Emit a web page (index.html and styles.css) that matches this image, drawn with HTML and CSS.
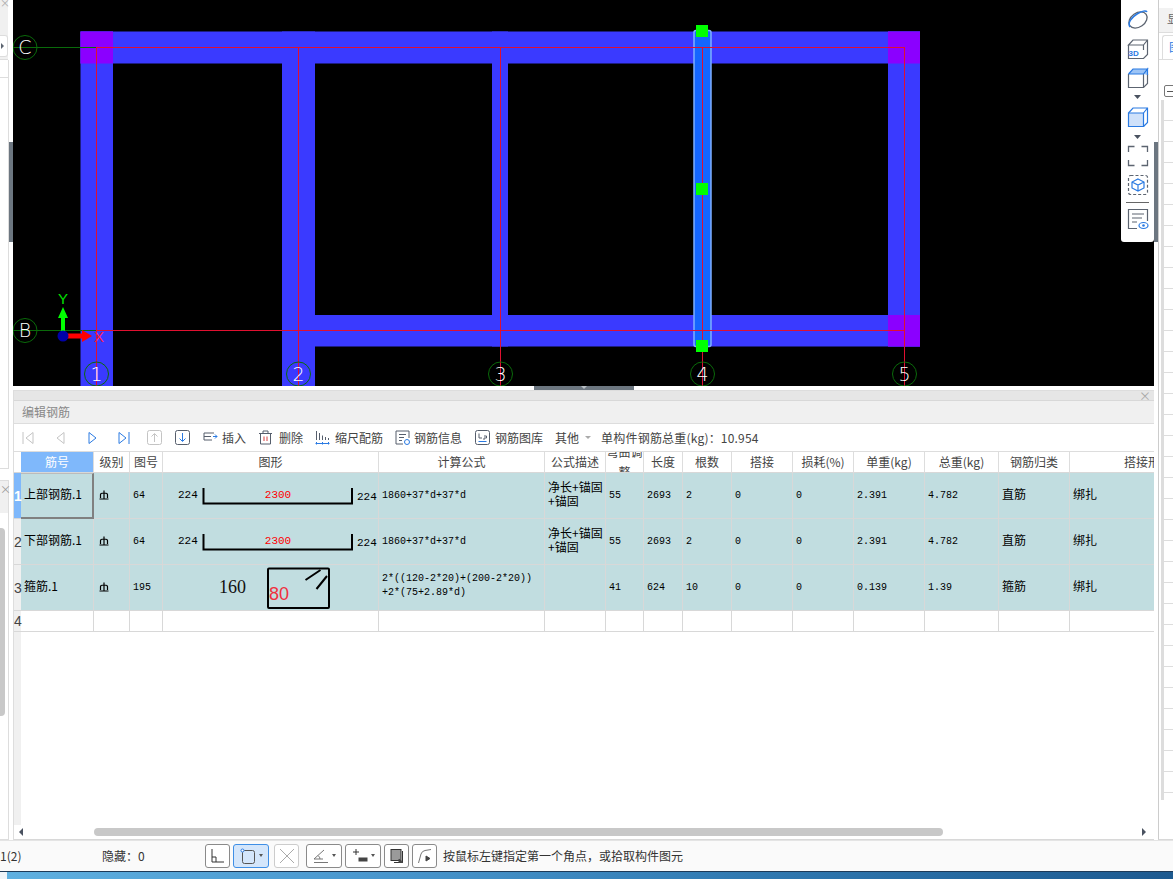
FILE: index.html
```html
<!DOCTYPE html>
<html lang="zh">
<head>
<meta charset="utf-8">
<title>编辑钢筋</title>
<link rel="stylesheet" href="styles.css">
</head>
<body>
<div class="top">
  <aside class="left">
    <div class="l-close">×</div>
    <div class="l-tabs"><div class="l-tab"><span class="l-arrow"></span></div></div>
    <div class="l-pane1"></div>
    <div class="l-pane2"></div>
    <div class="l-gap"></div>
    <div class="l-title">×</div>
    <div class="l-pane3"><div class="l-scroll"></div></div>
    <div class="l-handle"></div>
  </aside>

  <main class="center">
    <div class="canvas">
      <svg class="drawing" viewBox="13 0 1141 386" width="1141" height="386">
        <g fill="#3a3aff">
          <rect x="80.500" y="31.500" width="839.500" height="32"/>
          <rect x="80.500" y="31.500" width="32.500" height="354.500"/>
          <rect x="282" y="31.500" width="33" height="354.500"/>
          <rect x="492" y="31.500" width="16" height="315"/>
          <rect x="888" y="31.500" width="32" height="315"/>
          <rect x="282" y="315" width="638" height="31.500"/>
        </g>
        <g fill="#8b00ff">
          <rect x="80.500" y="31.500" width="32.500" height="32"/>
          <rect x="888" y="31.500" width="32" height="32"/>
          <rect x="888" y="315" width="32" height="31.500"/>
        </g>
        <rect class="sel" x="694" y="30.500" width="17" height="316" rx="2"/>
        <g class="axis-red">
          <path d="M96.500 47.500H904.500M96.500 330.500H904.500M96.500 47V386M298.500 47V386M500.500 47V386M702.500 47V386M904.500 47V386"/>
        </g>
        <g class="axis-green">
          <path d="M13 47.500H96M13 330.500H96"/>
          <circle cx="25" cy="47.500" r="12"/>
          <circle cx="25" cy="330.500" r="12"/>
          <circle cx="96.500" cy="374" r="12"/>
          <circle cx="298.500" cy="374" r="12"/>
          <circle cx="500.500" cy="374" r="12"/>
          <circle cx="702.500" cy="374" r="12"/>
          <circle cx="904.500" cy="374" r="12"/>
        </g>
        <g class="bubble-text">
          <text x="25" y="54">C</text>
          <text x="25" y="337">B</text>
          <text x="96.500" y="381">1</text>
          <text x="298.500" y="381">2</text>
          <text x="500.500" y="381">3</text>
          <text x="702.500" y="381">4</text>
          <text x="904.500" y="381">5</text>
        </g>
        <g fill="#00ff00">
          <rect x="696" y="25" width="12" height="12"/>
          <rect x="696" y="183" width="12" height="12"/>
          <rect x="696" y="340" width="12" height="12"/>
          <path d="M61 331V318H58L63 307L68 318H65V331Z"/>
        </g>
        <path d="M66 333.500H82V330L92 336L82 342V338.500H66Z" fill="#ff0000"/>
        <circle cx="63" cy="336" r="5.500" fill="#0000a8"/>
        <text class="axis-y" x="63" y="304">Y</text>
        <text class="axis-x" x="99" y="342">X</text>
      </svg>
      <div class="tools">
        <svg class="tool" viewBox="0 0 22 22"><ellipse cx="11" cy="11" rx="10" ry="7" transform="rotate(-35 11 11)" fill="none" stroke="#5c6470" stroke-width="1.300"/><path d="M3 18C0 14 5 8 10 5s9-4 10-2" fill="none" stroke="#2a7ae2" stroke-width="1.500"/></svg>
        <svg class="tool mt7" viewBox="0 0 22 22"><path d="M1.500 7V20.500H16.500L20.500 16.500V2H6L1.500 7H16.500V12M16.500 7L20.500 2" fill="none" stroke="#5c6470" stroke-width="1.200"/><text class="t3d" x="1.500" y="17.500">3D</text></svg>
        <svg class="tool mt7" viewBox="0 0 22 22"><path d="M1.500 7V20.500H16.500L20.500 16.500V7" fill="none" stroke="#5c6470" stroke-width="1.200"/><path d="M16.500 7V20.500" stroke="#5c6470" stroke-width="1.200"/><path d="M1.500 7L6 2H20.500L16.500 7H1.500M16.500 7L20.500 2V8" fill="#9cc4f6" stroke="#2a7ae2" stroke-width="1.200"/></svg>
        <svg class="caret mt6" viewBox="0 0 7 4"><path d="M0 0H7L3.500 4Z"/></svg>
        <svg class="tool mt7" viewBox="0 0 22 22"><path d="M1.500 7H16.500V20.500H1.500Z" fill="#cfe1fa" stroke="#2a7ae2" stroke-width="1.200"/><path d="M1.500 7L6 2H20.500V16.500L16.500 20.500M16.500 7L20.500 2" fill="none" stroke="#2a7ae2" stroke-width="1.200"/></svg>
        <svg class="caret mt7" viewBox="0 0 7 4"><path d="M0 0H7L3.500 4Z"/></svg>
        <svg class="tool mt6" viewBox="0 0 22 22"><path d="M1.500 7V1.500H7.500M14.500 1.500H20.500V7M20.500 15V20.500H14.500M7.500 20.500H1.500V15" fill="none" stroke="#5c6470" stroke-width="1.300"/></svg>
        <svg class="tool mt7" viewBox="0 0 22 22"><rect x="1.500" y="1.500" width="19" height="19" rx="2" fill="none" stroke="#5c6470" stroke-width="1.200" stroke-dasharray="3 2"/><path d="M11 5L17 8V14L11 17L5 14V8ZM5 8L11 11L17 8M11 11V17" fill="none" stroke="#2a7ae2" stroke-width="1.200"/></svg>
        <div class="tool-sep"></div>
        <svg class="tool mt5" viewBox="0 0 22 22"><path d="M10 20.500H1.500V1.500H20.500V13" fill="none" stroke="#5c6470" stroke-width="1.200"/><path d="M5 6H17M5 10H15M5 14H10" stroke="#5c6470" stroke-width="1.200"/><ellipse cx="16.500" cy="17.500" rx="4.500" ry="3" fill="none" stroke="#2a7ae2" stroke-width="1.200"/><circle cx="16.500" cy="17.500" r="1.300" fill="#2a7ae2"/></svg>
      </div>
    </div>

    <div class="sep"><div class="sep-handle"><span class="sep-arrow"></span></div></div>

    <section class="panel">
      <div class="p-strip"><span class="p-close">×</span></div>
      <div class="p-title">编辑钢筋</div>
      <div class="toolbar">
        <svg class="tb-nav" viewBox="0 0 12 14"><path d="M1 1V13M11 1.500V12.500L4 7Z" class="off"/></svg>
        <svg class="tb-nav nav-2" viewBox="0 0 12 14"><path d="M10 1.500V12.500L3 7Z" class="off"/></svg>
        <svg class="tb-nav nav-3" viewBox="0 0 12 14"><path d="M3 1.500V12.500L10 7Z" class="blue"/></svg>
        <svg class="tb-nav nav-4" viewBox="0 0 12 14"><path d="M1 1.500V12.500L8 7ZM11 1V13" class="blue"/></svg>
        <svg class="tb-box box-1" viewBox="0 0 15 15"><rect x="0.500" y="0.500" width="14" height="14" rx="2" class="off"/><path d="M7.500 12V4M4.500 6.500L7.500 3.500L10.500 6.500" class="off"/></svg>
        <svg class="tb-box box-2" viewBox="0 0 15 15"><rect x="0.500" y="0.500" width="14" height="14" rx="2" class="dark"/><path d="M7.500 3V11M4.500 8.500L7.500 11.500L10.500 8.500" class="blue"/></svg>
        <span class="tb-item i-insert"><svg class="tb-icon" viewBox="0 0 15 15"><path d="M11 3H1V10H9M1 6.500H8" class="dark"/><path d="M10 6.500H14M12 4.500L14 6.500L12 8.500" class="blue"/></svg>插入</span>
        <span class="tb-item i-del"><svg class="tb-icon" viewBox="0 0 15 15"><path d="M1 3.500H14M5 3.500V1H10V3.500M2.500 3.500V14H12.500V3.500" class="dark"/><path d="M6 6.500V11M9 6.500V11" class="red"/></svg>删除</span>
        <span class="tb-item i-scale"><svg class="tb-icon" viewBox="0 0 15 15"><path d="M1.500 1V10M4.500 3V10M7.500 5.500V10M10.500 7V10M13.500 8V10" class="dark"/><path d="M0.500 13.500H14.500M1.500 12V14.500M7.500 12V14.500M13.500 12V14.500" class="blue"/></svg>缩尺配筋</span>
        <span class="tb-item i-info"><svg class="tb-icon" viewBox="0 0 15 15"><path d="M8 14H1V1H14V8M4 4.500H11M4 7.500H9M4 10.500H7" class="dark"/><circle cx="12" cy="12" r="2.500" class="blue"/></svg>钢筋信息</span>
        <span class="tb-item i-lib"><svg class="tb-icon" viewBox="0 0 15 15"><rect x="0.500" y="0.500" width="14" height="14" rx="2" class="dark"/><path d="M4 3.500V8H7M9 6H11.500V8H9V10" class="dark"/><path d="M3.500 11.500H11.500" class="blue"/></svg>钢筋图库</span>
        <span class="tb-item i-other">其他<span class="tb-caret"></span></span>
        <span class="tb-total">单构件钢筋总重(kg)：10.954</span>
      </div>

      <div class="grid-wrap">
        <table class="grid">
          <colgroup>
            <col class="c0"><col class="c1"><col class="c2"><col class="c3"><col class="c4"><col class="c5"><col class="c6"><col class="c7"><col class="c8"><col class="c9"><col class="c10"><col class="c11"><col class="c12"><col class="c13"><col class="c14"><col class="c15">
          </colgroup>
          <thead>
            <tr>
              <th class="corner"></th>
              <th class="th-sel"><div class="clip">筋号</div></th>
              <th><div class="clip">级别</div></th>
              <th><div class="clip">图号</div></th>
              <th><div class="clip">图形</div></th>
              <th><div class="clip">计算公式</div></th>
              <th><div class="clip">公式描述</div></th>
              <th><div class="clip">弯曲调整</div></th>
              <th><div class="clip">长度</div></th>
              <th><div class="clip">根数</div></th>
              <th><div class="clip">搭接</div></th>
              <th><div class="clip">损耗(%)</div></th>
              <th><div class="clip">单重(kg)</div></th>
              <th><div class="clip">总重(kg)</div></th>
              <th><div class="clip">钢筋归类</div></th>
              <th><div class="clip">搭接形式</div></th>
            </tr>
          </thead>
          <tbody>
            <tr class="row">
              <td class="rh rh-sel">1</td>
              <td class="cjk name active">上部钢筋.1</td>
              <td class="lvl"><svg class="grade" viewBox="0 0 10 10"><path d="M1.500 8V4.500Q1.500 3 5 3T8.500 4.500V8M0.500 9H9.500M5 0.500V9"/></svg></td>
              <td class="num">64</td>
              <td class="shape"><svg class="shape-svg" viewBox="163 473 215 45"><text class="s-num" x="178" y="498">224</text><text class="s-num" x="357" y="500">224</text><path class="s-line" d="M203.500 488V503.500H352V488"/><text class="s-red" x="278" y="498">2300</text></svg></td>
              <td class="num">1860+37*d+37*d</td>
              <td class="cjk">净长+锚固<br>+锚固</td>
              <td class="num">55</td><td class="num">2693</td><td class="num">2</td><td class="num">0</td><td class="num">0</td>
              <td class="num">2.391</td><td class="num">4.782</td>
              <td class="cjk">直筋</td><td class="cjk">绑扎</td>
            </tr>
            <tr class="row">
              <td class="rh">2</td>
              <td class="cjk name">下部钢筋.1</td>
              <td class="lvl"><svg class="grade" viewBox="0 0 10 10"><path d="M1.500 8V4.500Q1.500 3 5 3T8.500 4.500V8M0.500 9H9.500M5 0.500V9"/></svg></td>
              <td class="num">64</td>
              <td class="shape"><svg class="shape-svg" viewBox="163 473 215 45"><text class="s-num" x="178" y="498">224</text><text class="s-num" x="357" y="500">224</text><path class="s-line" d="M203.500 488V503.500H352V488"/><text class="s-red" x="278" y="498">2300</text></svg></td>
              <td class="num">1860+37*d+37*d</td>
              <td class="cjk">净长+锚固<br>+锚固</td>
              <td class="num">55</td><td class="num">2693</td><td class="num">2</td><td class="num">0</td><td class="num">0</td>
              <td class="num">2.391</td><td class="num">4.782</td>
              <td class="cjk">直筋</td><td class="cjk">绑扎</td>
            </tr>
            <tr class="row">
              <td class="rh">3</td>
              <td class="cjk name">箍筋.1</td>
              <td class="lvl"><svg class="grade" viewBox="0 0 10 10"><path d="M1.500 8V4.500Q1.500 3 5 3T8.500 4.500V8M0.500 9H9.500M5 0.500V9"/></svg></td>
              <td class="num">195</td>
              <td class="shape"><svg class="shape-svg" viewBox="163 565 215 45"><text class="s-160" x="219" y="593">160</text><rect class="s-line" x="268" y="568.500" width="61" height="39.500" rx="1"/><path class="s-line" d="M305.500 580L320.500 570M316.500 589L327 576"/><text class="s-80" x="269" y="600">80</text></svg></td>
              <td class="num formula">2*((120-2*20)+(200-2*20))<br>+2*(75+2.89*d)</td>
              <td></td>
              <td class="num">41</td><td class="num">624</td><td class="num">10</td><td class="num">0</td><td class="num">0</td>
              <td class="num">0.139</td><td class="num">1.39</td>
              <td class="cjk">箍筋</td><td class="cjk">绑扎</td>
            </tr>
            <tr class="row-empty">
              <td class="rh">4</td><td></td><td></td><td></td><td></td><td></td><td></td><td></td><td></td><td></td><td></td><td></td><td></td><td></td><td></td><td></td>
            </tr>
          </tbody>
        </table>
      </div>
      <div class="grid-fill"></div>
      <div class="hscroll">
        <span class="arrow-l"></span>
        <span class="thumb"></span>
        <span class="arrow-r"></span>
      </div>
    </section>
  </main>

  <aside class="right">
    <div class="r-handle"></div>
    <div class="r-body">
      <div class="r-tabs">显</div>
      <div class="r-tabrow"><span class="r-tab">图</span></div>
      <div class="r-tree">
        <span class="r-minus"></span>
        <div class="r-rows"></div>
      </div>
    </div>
  </aside>
</div>

<footer class="status">
  <span class="st-count">1(2)</span>
  <span class="st-hidden">隐藏：0</span>
  <span class="st-btn b-1"><svg class="st-ic" viewBox="0 0 16 16"><path d="M2 1V14H14M2 9H6V14"/></svg></span>
  <span class="st-btn st-on b-wide"><svg class="st-ic" viewBox="0 0 16 16"><rect x="2.500" y="2.500" width="12" height="13" rx="2"/><circle cx="2.500" cy="2.500" r="1.500" class="st-dot"/></svg><span class="st-caret"></span></span>
  <span class="st-btn st-off b-1"><svg class="st-ic" viewBox="0 0 16 16"><path d="M1 1L15 15M15 1L1 15"/></svg></span>
  <span class="st-btn b-wide b-angle"><svg class="st-ic" viewBox="0 0 16 16"><path d="M1 11L11 2M1 11H10M5 7.500Q7 9 7 11M1 14.500H15" class="st-soft"/></svg><span class="st-caret"></span></span>
  <span class="st-btn b-wide b-plus"><svg class="st-ic" viewBox="0 0 16 16"><path d="M1 4H7M4 1V7"/><rect x="7" y="10" width="8" height="3" class="st-fill"/></svg><span class="st-caret"></span></span>
  <span class="st-btn b-1"><svg class="st-ic" viewBox="0 0 16 16"><rect x="2" y="1.500" width="10" height="11" class="st-mid"/><path d="M13.500 3V14.500H5"/><path d="M10 11L14 14.500H10Z" class="st-fill"/></svg></span>
  <span class="st-btn b-1"><svg class="st-ic" viewBox="0 0 16 16"><path d="M1.500 15L4 6Q5 3 8 2.500L14 1.500" class="st-soft"/><path d="M9 8V13L13 10.500Z" class="st-fill"/></svg></span>
  <span class="st-msg">按鼠标左键指定第一个角点，或拾取构件图元</span>
</footer>
<div class="taskbar"><span class="task-start"></span><span class="task-band"></span></div>
</body>
</html>
```
FILE: styles.css
```css
* { box-sizing: border-box; }
html, body { margin: 0; padding: 0; }
body {
  width: 1173px;
  height: 879px;
  overflow: hidden;
  background: #fff;
  font-family: "Noto Sans CJK SC", "Liberation Sans", sans-serif;
  font-size: 12px;
  color: #333;
  display: flex;
  flex-direction: column;
}
.top { display: flex; height: 840px; flex: none; }

/* left dock */
.left { width: 13px; flex: none; position: relative; display: flex; flex-direction: column; overflow: hidden; }
.l-close { height: 8px; background: #efefef; color: #aaa; font-size: 10px; line-height: 6px; width: 8px; }
.l-tabs { height: 52px; background: #f0f0f0; width: 8px; border-bottom: 1px solid #ddd; padding-top: 27px; }
.l-tab { height: 22px; width: 8px; background: #fff; border: 1px solid #ddd; border-left: 0; border-radius: 0 3px 3px 0; display: flex; align-items: center; justify-content: flex-end; }
.l-arrow { width: 0; height: 0; border: 3px solid transparent; border-left: 3px solid #5c6470; }
.l-pane1 { height: 18px; width: 9px; border-right: 1px solid #ddd; border-bottom: 1px solid #ddd; }
.l-pane2 { height: 391px; width: 9px; border-right: 1px solid #ddd; border-bottom: 1px solid #ddd; }
.l-gap { height: 11px; }
.l-title { height: 33px; width: 9px; background: #f0f0f0; border-right: 1px solid #ddd; color: #999; font-size: 11px; line-height: 16px; border-top: 1px solid #ddd; }
.l-pane3 { flex: 1; width: 9px; border-right: 1px solid #ddd; border-bottom: 1px solid #ddd; padding-top: 15px; }
.l-scroll { width: 5px; height: 188px; background: #c8c8c8; border-radius: 0 4px 4px 0; }
.l-handle { position: absolute; left: 9px; top: 142px; width: 4px; height: 100px; background: #6c7680; }

/* centre */
.center { width: 1141px; flex: none; display: flex; flex-direction: column; }
.canvas { height: 386px; background: #000; position: relative; flex: none; overflow: hidden; }
.drawing { display: block; }
.sel { fill: #1466ff; stroke: #7fb0ff; stroke-width: 1.500; }
.axis-red path { stroke: #e01030; stroke-width: 1; fill: none; }
.axis-green path, .axis-green circle { stroke: #0a6a0a; stroke-width: 1; fill: none; }
.bubble-text text { fill: #fff; font-family: "DejaVu Sans", sans-serif; font-weight: 200; font-size: 19px; text-anchor: middle; }
.axis-y { fill: #00e000; font: 15px "Liberation Sans", sans-serif; text-anchor: middle; }
.axis-x { fill: #ff2050; font: 15px "Liberation Sans", sans-serif; text-anchor: middle; }

.tools { position: absolute; right: 0; top: 0; width: 33px; height: 242px; background: #fff; border-radius: 0 0 3px 3px; padding-top: 9px; display: flex; flex-direction: column; align-items: center; }
.tool { width: 22px; height: 22px; flex: none; display: block; }
.caret { width: 7px; height: 4px; flex: none; display: block; fill: #4a5260; }
.mt7 { margin-top: 7px; }
.mt6 { margin-top: 6px; }
.mt5 { margin-top: 5px; }
.t3d { font: bold 8px "Liberation Sans", sans-serif; fill: #2a7ae2; }
.tool-sep { width: 23px; height: 1px; background: #666; margin-top: 6px; flex: none; }

.sep { height: 4px; background: #fff; display: flex; justify-content: center; flex: none; }
.sep-handle { width: 100px; height: 4px; background: #6c7680; display: flex; justify-content: center; }
.sep-arrow { width: 0; height: 0; border: 3px solid transparent; border-top: 3px solid #b8bec4; }

/* panel */
.panel { flex: 1; display: flex; flex-direction: column; border-left: 1px solid #ddd; border-bottom: 1px solid #d8d8d8; min-height: 0; }
.p-strip { height: 11px; flex: none; background: #e6e6e6; border-top: 1px solid #ddd; border-bottom: 1px solid #d8d8d8; display: flex; justify-content: flex-end; align-items: center; padding-right: 3px; color: #a8a8a8; font-size: 12px; }
.p-close { line-height: 9px; }
.p-title { height: 23px; flex: none; background: #f0f0f0; border-bottom: 1px solid #ddd; color: #888; padding-left: 8px; line-height: 21px; }

.toolbar { height: 27px; flex: none; display: flex; align-items: center; padding-left: 8px; background: #fff; color: #444; white-space: nowrap; }
.toolbar svg { flex: none; display: block; fill: none; stroke-width: 1; }
.off { stroke: #c4c4c4; fill: none; }
.blue { stroke: #2a7ae2; fill: none; }
.dark { stroke: #565e6c; fill: none; }
.red { stroke: #d84040; fill: none; }
.tb-nav { width: 12px; height: 14px; }
.nav-2, .nav-3, .nav-4 { margin-left: 20px; }
.tb-box { width: 15px; height: 15px; }
.box-1 { margin-left: 17px; }
.box-2 { margin-left: 13px; }
.tb-item { display: inline-flex; align-items: center; gap: 5px; }
.tb-icon { width: 15px; height: 15px; }
.i-insert { margin-left: 13px; gap: 4px; }
.i-del { margin-left: 12px; gap: 6px; }
.i-scale { margin-left: 12px; }
.i-info { margin-left: 12px; gap: 4px; }
.i-lib { margin-left: 13px; }
.i-other { margin-left: 12px; gap: 6px; }
.tb-caret { width: 0; height: 0; border: 3px solid transparent; border-top: 3px solid #aaa; border-bottom: 0; }
.tb-total { margin-left: 10px; font-size: 12px; letter-spacing: 0.2px; }

/* grid */
.grid-wrap { flex: none; overflow: hidden; }
.grid { table-layout: fixed; border-collapse: separate; border-spacing: 0; width: 1213px; background: #fff; }
.c0 { width: 7px; } .c1 { width: 73px; } .c2 { width: 36px; } .c3 { width: 33px; }
.c4 { width: 216px; } .c5 { width: 166px; } .c6 { width: 61px; } .c7 { width: 38px; }
.c8 { width: 39px; } .c9 { width: 49px; } .c10 { width: 61px; } .c11 { width: 61px; }
.c12 { width: 71px; } .c13 { width: 74px; } .c14 { width: 71px; } .c15 { width: 157px; }
.grid th { padding: 0; height: 22px; font-weight: 400; color: #444; font-size: 12px; border-top: 1px solid #ddd; border-right: 1px solid #ddd; border-bottom: 1px solid #d8d8d8; background: #fff; }
.clip { height: 20px; overflow: hidden; display: flex; align-items: center; justify-content: center; line-height: 20px; text-align: center; }
.grid th.corner { border-right: 0; }
.grid th.th-sel { background: #7fb8fb; color: #fff; }
.grid td { padding: 0 0 0 3px; background: #c1dde0; border-right: 1px solid #d8d8d8; border-bottom: 1px solid #d8d8d8; color: #000; white-space: nowrap; overflow: hidden; height: 46px; }
.grid .row-empty td { height: 21px; background: #fff; padding: 0; }
.num { font-family: "Liberation Mono", monospace; font-size: 10px; line-height: 14px; }
.grid td.cjk { font-size: 12px; line-height: 14px; padding-bottom: 4px; }
.active.active { border-right: 2px solid #808080; border-bottom: 2px solid #808080; border-top: 1px solid #bbb; }
.grid td.formula { padding-bottom: 4px; }
.grid td.lvl { padding: 2px 0 4px 5px; }
.grade { width: 10px; height: 10px; display: block; fill: none; stroke: #000; stroke-width: 1.200; }
.grid td.rh, .grid .row-empty td.rh { background: #f0f0f0; color: #444; font: 14px "Liberation Sans", sans-serif; padding: 0; border-right: 0; border-bottom: 1px solid #d8d8d8; text-align: left; overflow: visible; }
.grid td.rh-sel { background: #7fb8fb; color: #fff; font-weight: 700; }
.grid td.shape { padding: 0; }
.shape-svg { display: block; width: 215px; height: 45px; }
.s-num { font: 11px "Liberation Mono", monospace; fill: #000; }
.s-red { font: 11px "Liberation Mono", monospace; fill: #ff0000; text-anchor: middle; }
.s-line { fill: none; stroke: #000; stroke-width: 2; }
.s-160 { font: 18px "Liberation Serif", serif; fill: #111; }
.s-80 { font: 18px "Liberation Sans", sans-serif; fill: #f03040; }

.grid-fill { flex: 1; border-left: 7px solid #f0f0f0; min-height: 0; }
.hscroll { height: 14px; flex: none; background: #fff; display: flex; align-items: center; }
.arrow-l { width: 0; height: 0; border: 4px solid transparent; border-right: 4px solid #4a5260; border-left: 0; margin-left: 5px; }
.thumb { width: 849px; height: 8px; background: #c8c8c8; border-radius: 4px; margin-left: 71px; }
.arrow-r { width: 0; height: 0; border: 4px solid transparent; border-left: 4px solid #4a5260; border-right: 0; margin-left: 199px; }

/* right dock */
.right { flex: 1; display: flex; position: relative; }
.r-handle { width: 4px; flex: none; margin-top: 142px; height: 100px; background: #6c7680; }
.r-body { flex: 1; border-left: 1px solid #ccc; border-bottom: 1px solid #d8d8d8; display: flex; flex-direction: column; overflow: hidden; }
.r-tabs { height: 25px; margin-top: 8px; flex: none; background: #f2f2f2; padding-left: 8px; line-height: 22px; color: #666; white-space: nowrap; border-bottom: 1px solid #ddd; }
.r-tabrow { height: 27px; flex: none; border-bottom: 1px solid #ddd; padding: 2px 0 0 3px; }
.r-tab { display: block; height: 25px; border: 1px solid #ddd; border-bottom: 0; border-right: 0; border-radius: 3px 0 0 0; padding-left: 6px; color: #2a7ae2; line-height: 22px; }
.r-tree { flex: 1; position: relative; padding: 0 0 0 2px; }
.r-minus { position: absolute; left: 5px; top: 25px; width: 12px; height: 12px; border: 1px solid #777; border-radius: 2px; background: linear-gradient(#555,#555) center/6px 1px no-repeat; }
.r-rows { margin-top: 40px; height: 700px; border-left: 3px solid #ddd; background: repeating-linear-gradient(#fff 0 20px, #ddd 20px 21px); }

/* status */
.status { height: 31px; flex: none; background: #fafafa; display: flex; align-items: center; white-space: nowrap; color: #333; border-top: 1px solid #e4e4e4; padding-bottom: 1px; }
.st-count { width: 102px; }
.st-hidden { width: 103px; }
.st-btn { height: 24px; width: 25px; margin-right: 3px; border: 1px solid #8a8a8a; border-radius: 3px; display: inline-flex; align-items: center; justify-content: center; background: #fff; flex: none; gap: 3px; }
.b-wide { width: 36px; }
.b-angle { margin-left: 4px; }
.b-plus { margin-right: 3px; }
.st-on { background: #d4e6fb; border-color: #3f8fe6; margin-right: 5px; }
.st-off { border-color: #ccc; }
.st-ic { width: 16px; height: 16px; fill: none; stroke: #333; stroke-width: 1; display: block; }
.st-on .st-ic { stroke: #555; }
.st-dot { stroke: #2a7ae2; fill: #fff; }
.st-off .st-ic { stroke: #aaa; }
.st-soft { stroke: #777; }
.st-fill { fill: #444; stroke: #444; }
.st-mid { fill: #9a9a9a; stroke: #333; }
.st-caret { width: 0; height: 0; border: 2.500px solid transparent; border-top: 3px solid #555; border-bottom: 0; }
.st-msg { margin-left: 3px; color: #333; }

/* taskbar */
.taskbar { height: 8px; flex: none; display: flex; border-top: 1px solid #1d3a58; }
.task-start { width: 7px; background: #eef3f8; }
.task-band { flex: 1; background: linear-gradient(90deg, #5fb0e0 0, #4a98cf 30%, #2f78b0 65%, #1d5a90 100%); }
```
